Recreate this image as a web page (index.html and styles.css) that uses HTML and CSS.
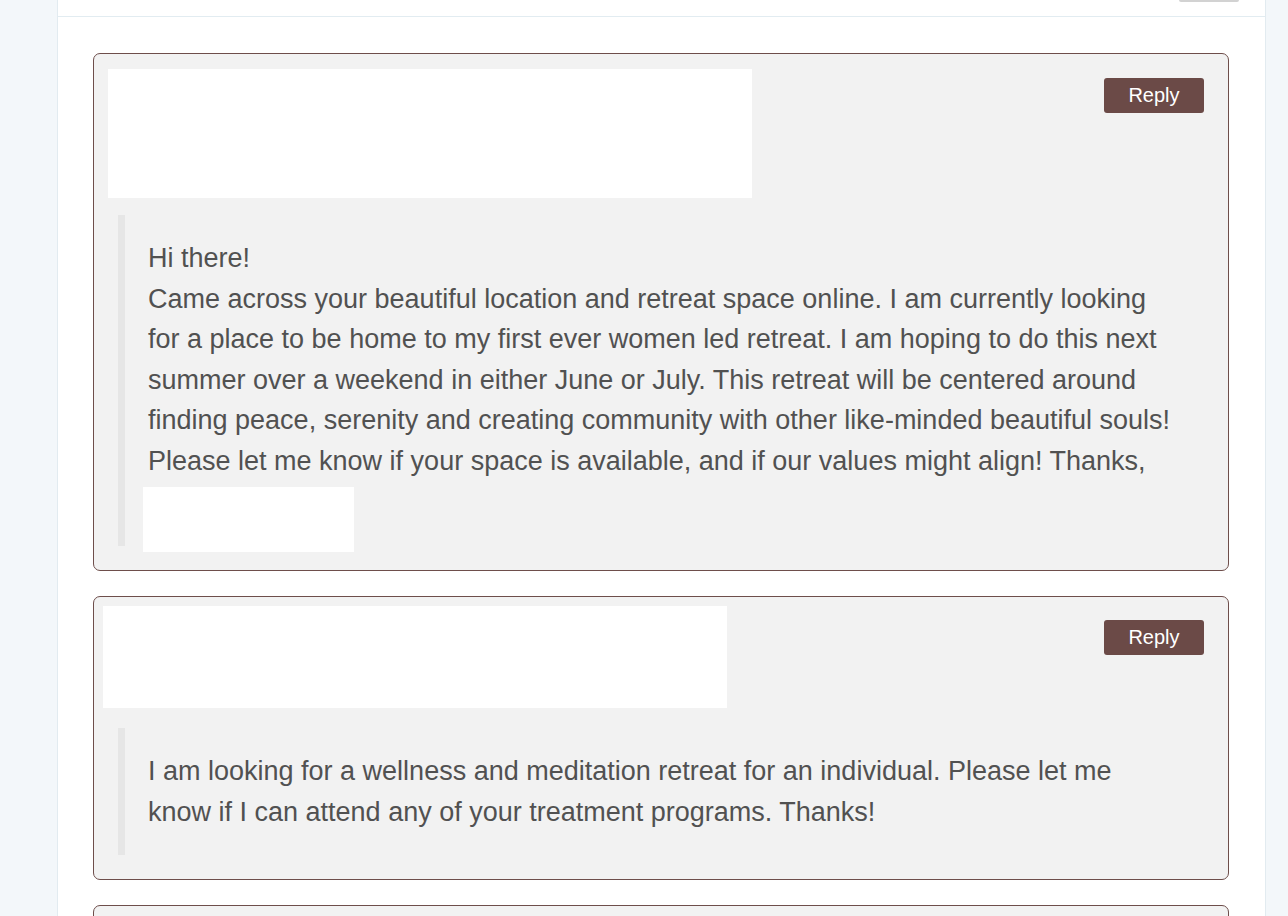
FILE: index.html
```html
<!DOCTYPE html>
<html lang="en">
<head>
<meta charset="utf-8">
<title>Inquiries</title>
<link rel="stylesheet" href="styles.css">
</head>
<body>
<div class="panel">
  <div class="panel-top">
    <span class="top-btn"></span>
  </div>
  <div class="panel-body">
    <div class="card">
      <div class="card-head">
        <div class="redact redact-1"></div>
        <button class="reply">Reply</button>
      </div>
      <blockquote class="quote quote-1">
        <p>Hi there!<br>Came across your beautiful location and retreat space online. I am currently looking for a place to be home to my first ever women led retreat. I am hoping to do this next summer over a weekend in either June or July. This retreat will be centered around finding peace, serenity and creating community with other like-minded beautiful souls! Please let me know if your space is available, and if our values might align! Thanks,</p>
        <div class="redact sig"></div>
      </blockquote>
    </div>
    <div class="card">
      <div class="card-head">
        <div class="redact redact-2"></div>
        <button class="reply reply-2">Reply</button>
      </div>
      <blockquote class="quote quote-2">
        <p>I am looking for a wellness and meditation retreat for an individual. Please let me know if I can attend any of your treatment programs. Thanks!</p>
      </blockquote>
    </div>
    <div class="card card-3"></div>
  </div>
</div>
</body>
</html>
```
FILE: styles.css
```css
* { box-sizing: border-box; }
html, body {
  margin: 0;
  padding: 0;
  background: #f3f7fa;
  font-family: "Liberation Sans", Arial, sans-serif;
  height: 916px;
  overflow: hidden;
}
.panel {
  margin-left: 57px;
  width: 1209px;
  min-height: 916px;
  background: #ffffff;
  border-left: 1px solid #e2ebf0;
  border-right: 1px solid #e2ebf0;
}
.panel-top {
  height: 17px;
  border-bottom: 1px solid #e2ecf1;
  display: flex;
  justify-content: flex-end;
  align-items: flex-start;
  padding-right: 26px;
}
.top-btn {
  display: block;
  width: 60px;
  height: 2px;
  background: #d2d2d2;
  border-radius: 0 0 2px 2px;
}
.panel-body {
  padding: 36px 36px 0 35px;
}
.card {
  background: #f2f2f2;
  border: 1px solid #6e4e4b;
  border-radius: 7px;
  padding: 9px;
  margin-bottom: 25px;
}
.card-3 { height: 40px; }
.card-head {
  display: flex;
  justify-content: space-between;
  align-items: flex-start;
}
.redact { background: #ffffff; }
.redact-1 {
  width: 644px;
  height: 129px;
  margin: 6px 0 0 5px;
}
.redact-2 {
  width: 624px;
  height: 102px;
}
.reply {
  width: 100px;
  height: 35px;
  margin: 15px 15px 0 0;
  background: #6b4a47;
  color: #ffffff;
  border: none;
  border-radius: 3px;
  font-family: "Liberation Sans", Arial, sans-serif;
  font-size: 20px;
  line-height: 35px;
  padding: 0;
}
.reply-2 { margin-top: 14px; }
.quote {
  margin: 17px 0 15px 15px;
  border-left: 7px solid #e6e6e6;
  padding: 23px 40px 23px 23px;
  color: #515151;
  font-size: 27px;
  line-height: 1.5;
}
.quote-2 { margin-top: 20px; }
.quote p { margin: 0; }
.sig {
  width: 211px;
  height: 65px;
  margin: 6px 0 -29px -5px;
}
```
